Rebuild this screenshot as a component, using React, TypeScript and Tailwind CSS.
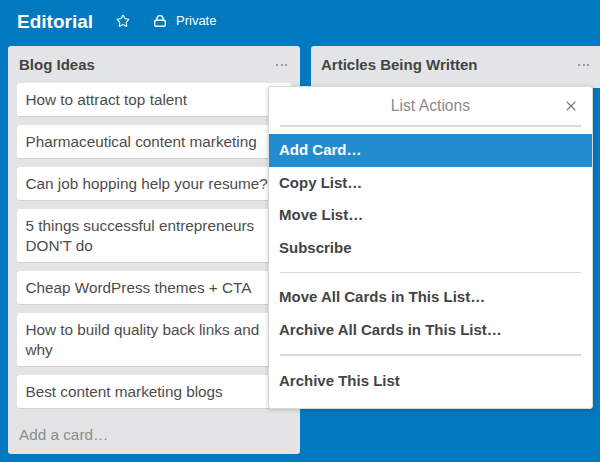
import { Star, X } from "lucide-react";

const cards = [
  "How to attract top talent",
  "Pharmaceutical content marketing",
  "Can job hopping help your resume?",
  "5 things successful entrepreneurs DON'T do",
  "Cheap WordPress themes + CTA",
  "How to build quality back links and why",
  "Best content marketing blogs",
];

function Dots() {
  return (
    <div className="flex gap-[2.5px]">
      <span className="w-[2px] h-[2px] bg-[#999]" />
      <span className="w-[2px] h-[2px] bg-[#999]" />
      <span className="w-[2px] h-[2px] bg-[#999]" />
    </div>
  );
}

function Action({ label, active }: { label: string; active?: boolean }) {
  return (
    <div
      className={
        active
          ? "h-[32.5px] px-[10px] flex items-center text-[15px] font-bold bg-[#228dce] text-white"
          : "h-[32.5px] px-[10px] flex items-center text-[15px] font-bold text-[#444]"
      }
    >
      {label}
    </div>
  );
}

export default function App() {
  return (
    <div className="relative w-[600px] h-[462px] overflow-hidden bg-[#0079bf] font-['Liberation_Sans',Arial,sans-serif]">
      <div className="h-[46px] pb-[4px] pl-[17px] flex items-center text-white">
        <h1 className="text-[19px] font-bold leading-none w-[99px]">Editorial</h1>
        <Star size={14} strokeWidth={1.8} />
        <svg width="12" height="12" viewBox="0 0 12 12" fill="none" stroke="currentColor" strokeWidth="1.4" className="ml-[24px]">
          <rect x="0.7" y="5.2" width="10.6" height="6" rx="1.2" />
          <path d="M3 5V3.6a3 3 0 0 1 6 0V5" />
        </svg>
        <span className="ml-[10px] text-[13px]">Private</span>
      </div>

      <div className="flex items-start gap-[11px] pl-[8px]">
        <div className="w-[292px] h-[408px] shrink-0 rounded-[3px] bg-[#e2e4e6] px-[9px]">
          <div className="h-[37px] pt-[1px] flex items-center justify-between pl-[2px] pr-[4px]">
            <h2 className="text-[15px] font-bold text-[#444]">Blog Ideas</h2>
            <Dots />
          </div>
          <div className="flex flex-col gap-[8px]">
            {cards.map((card) => (
              <div
                key={card}
                className="rounded-[3px] bg-white pl-[8.5px] pr-[9px] pt-[7px] pb-[6px] text-[15.3px] leading-[20px] text-[#4d4d4d] border-b border-[#cdd2d4]"
              >
                {card}
              </div>
            ))}
          </div>
          <p className="mt-[17px] pl-[2px] text-[15.3px] leading-[18px] text-[#8c8c8c]">Add a card…</p>
        </div>

        <div className="w-[300px] h-[42px] shrink-0 rounded-[3px] bg-[#e2e4e6] pl-[10px] pr-[22px]">
          <div className="h-[37px] pt-[1px] flex items-center justify-between">
            <h2 className="text-[15px] font-bold text-[#444]">Articles Being Written</h2>
            <Dots />
          </div>
        </div>
      </div>

      <div className="absolute left-[268px] top-[86px] w-[325px] h-[323px] rounded-[3px] bg-white border border-[#d6dadc] shadow-[0_1px_4px_rgba(0,0,0,0.2)]">
        <div className="relative mx-[11px] h-[40px] flex items-center justify-center border-b-2 border-[#d6dadc] text-[15.7px] text-[#8c8c8c]">
          List Actions
          <X size={16} strokeWidth={1.6} className="absolute right-[2px] top-[11px] text-[#777]" />
        </div>
        <div className="mt-[7px]">
          <Action label="Add Card…" active />
          <Action label="Copy List…" />
          <Action label="Move List…" />
          <Action label="Subscribe" />
        </div>
        <div className="mx-[11px] my-[8px] border-t border-[#d6dadc]" />
        <Action label="Move All Cards in This List…" />
        <Action label="Archive All Cards in This List…" />
        <div className="mx-[11px] mt-[8px] mb-[9px] border-t-2 border-[#d6dadc]" />
        <Action label="Archive This List" />
      </div>
    </div>
  );
}
